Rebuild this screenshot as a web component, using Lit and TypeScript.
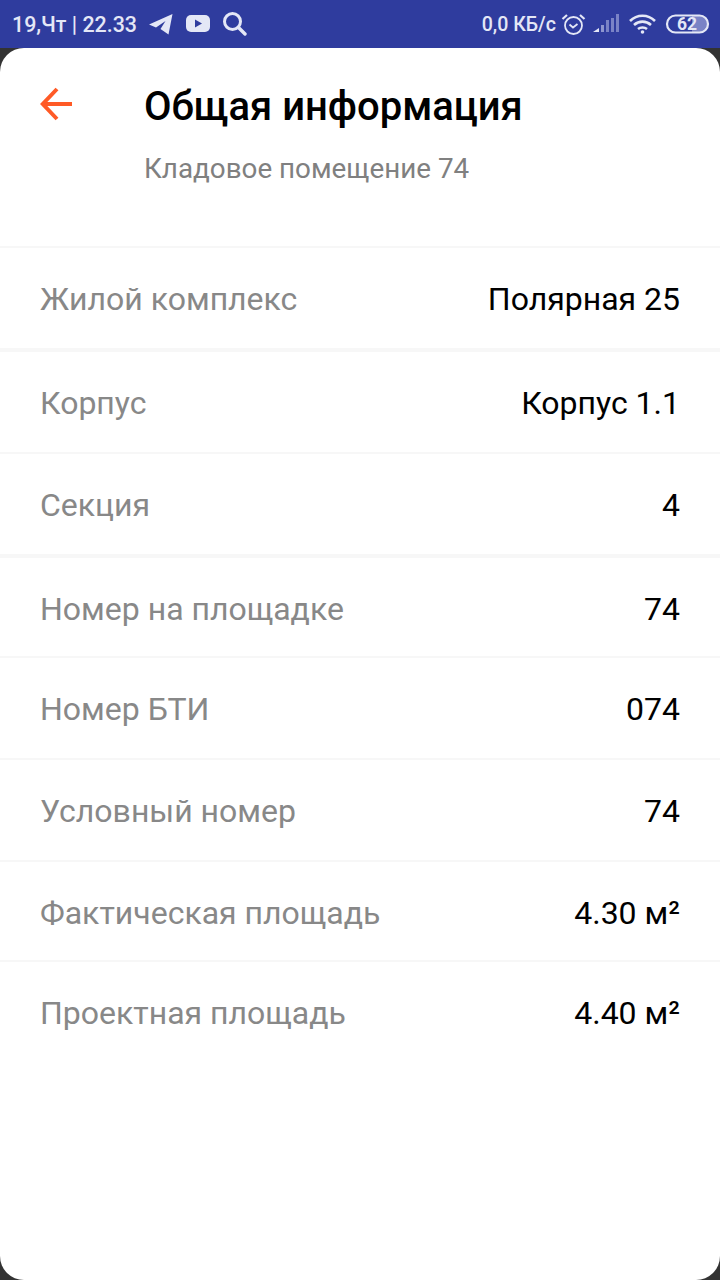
import { LitElement, html, css, svg } from 'lit';
import { customElement } from 'lit/decorators.js';

const rows = [
  { label: 'Жилой комплекс', value: 'Полярная 25', kind: '' },
  { label: 'Корпус', value: 'Корпус 1.1', kind: 'thick' },
  { label: 'Секция', value: '4', kind: '' },
  { label: 'Номер на площадке', value: '74', kind: 'thick short' },
  { label: 'Номер БТИ', value: '074', kind: '' },
  { label: 'Условный номер', value: '74', kind: '' },
  { label: 'Фактическая площадь', value: '4.30 м²', kind: 'short' },
  { label: 'Проектная площадь', value: '4.40 м²', kind: '' },
];

@customElement('app-root')
export class AppRoot extends LitElement {
  static styles = css`
    :host {
      display: flex;
      flex-direction: column;
      height: 1280px;
      background: #333;
      font-family: Roboto, sans-serif;
      overflow: hidden;
    }

    .status {
      flex: none;
      height: 48px;
      background: #2f3c9e;
      color: #e4e7f6;
      display: flex;
      align-items: center;
      justify-content: space-between;
      padding-left: 12px;
      font-size: 21.4px;
      font-weight: 500;
    }

    .side {
      display: flex;
      align-items: center;
    }

    .side svg {
      display: block;
    }

    .speed {
      font-size: 19.6px;
    }

    .right-icons {
      margin-left: 2px;
    }

    .sheet {
      flex: 1;
      background: #fff;
      border-radius: 24px;
    }

    .head {
      display: grid;
      grid-template-columns: 144px 1fr;
      height: 198px;
      box-sizing: border-box;
      padding-top: 34px;
    }

    .back {
      margin: 5px 0 0 40px;
    }

    h1 {
      margin: 0;
      font-size: 40px;
      line-height: 50px;
      font-weight: 500;
      color: #000;
    }

    .sub {
      margin-top: 21px;
      font-size: 27.8px;
      line-height: 32px;
      color: #808080;
    }

    .row {
      display: flex;
      align-items: center;
      justify-content: space-between;
      padding: 2px 40px 0;
      height: 102px;
      box-sizing: border-box;
      border-top: 2px solid #f7f7f7;
      font-size: 32px;
    }

    .row.thick {
      height: 104px;
      border-top-width: 4px;
    }

    .row.short {
      height: 100px;
      padding-top: 3px;
    }

    .row.thick.short {
      height: 102px;
    }

    .label {
      color: #888;
    }

    .value {
      color: #000;
    }
  `;

  leftIcons() {
    return svg`
      <path d="M149 24.5 L172.5 14 L168.5 34.5 L160.5 29 L165.5 21 L156 27.5 Z" fill="#e4e7f6"/>
      <rect x="186" y="15" width="24" height="17" rx="5" fill="#e4e7f6"/>
      <path d="M195 19.5 L202 23.5 L195 27.5 Z" fill="#2f3c9e"/>
      <circle cx="232.5" cy="21.5" r="8" fill="none" stroke="#e4e7f6" stroke-width="3"/>
      <path d="M238.5 27.5 L245 34" stroke="#e4e7f6" stroke-width="3.4" stroke-linecap="round"/>
    `;
  }

  rightIcons() {
    return svg`
      <g fill="none" stroke="#e4e7f6">
        <circle cx="573.5" cy="25.5" r="8.5" stroke-width="1.8"/>
        <path d="M569.5 24.5 L573 27.5 L577.5 24" stroke-width="1.8"/>
        <path d="M562.5 19 L567 15 M584.5 19 L580 15" stroke-width="2.2"/>
      </g>
      <path d="M593 32 L599 28 V32 Z" fill="#e4e7f6"/>
      <rect x="601" y="25" width="3" height="7" fill="#8e96cf"/>
      <rect x="606" y="20" width="3" height="12" fill="#7a83c6"/>
      <rect x="611" y="18" width="3" height="14" fill="#7a83c6"/>
      <rect x="616" y="14" width="3" height="18" fill="#7a83c6"/>
      <g fill="none" stroke="#e4e7f6" stroke-width="2.6">
        <path d="M630 21 C637 14 648 14 655 21"/>
        <path d="M634 25 C639 20.5 646 20.5 651 25"/>
        <path d="M638 29 C640.5 27 644.5 27 647 29"/>
      </g>
      <circle cx="642.5" cy="32" r="1.8" fill="#e4e7f6"/>
      <path d="M692 16 H699 a8.5 8.5 0 0 1 0 17 H692 Z" fill="#7a83c6"/>
      <rect x="667" y="15.5" width="41" height="17" rx="8.5" fill="none" stroke="#e4e7f6" stroke-width="2.2"/>
      <text x="687" y="30" text-anchor="middle" font-size="17.5" font-weight="700" fill="#e4e7f6">62</text>
    `;
  }

  render() {
    return html`
      <div class="status">
        <div class="side">
          <span>19,Чт | 22.33</span>
          <svg width="110" height="48" viewBox="137 0 110 48">${this.leftIcons()}</svg>
        </div>
        <div class="side">
          <span class="speed">0,0 КБ/с</span>
          <svg class="right-icons" width="162" height="48" viewBox="558 0 162 48">${this.rightIcons()}</svg>
        </div>
      </div>
      <div class="sheet">
        <div class="head">
          <svg class="back" width="34" height="34" viewBox="0 0 34 34" fill="none" stroke="#ff5a26" stroke-width="4">
            <path d="M32 17 H3"/>
            <path d="M17 2 L2.8 17 L17 32"/>
          </svg>
          <div>
            <h1>Общая информация</h1>
            <div class="sub">Кладовое помещение 74</div>
          </div>
        </div>
        ${rows.map(
          (r) => html`
            <div class="row ${r.kind}">
              <span class="label">${r.label}</span>
              <span class="value">${r.value}</span>
            </div>
          `
        )}
      </div>
    `;
  }
}

declare global {
  interface HTMLElementTagNameMap {
    'app-root': AppRoot;
  }
}
